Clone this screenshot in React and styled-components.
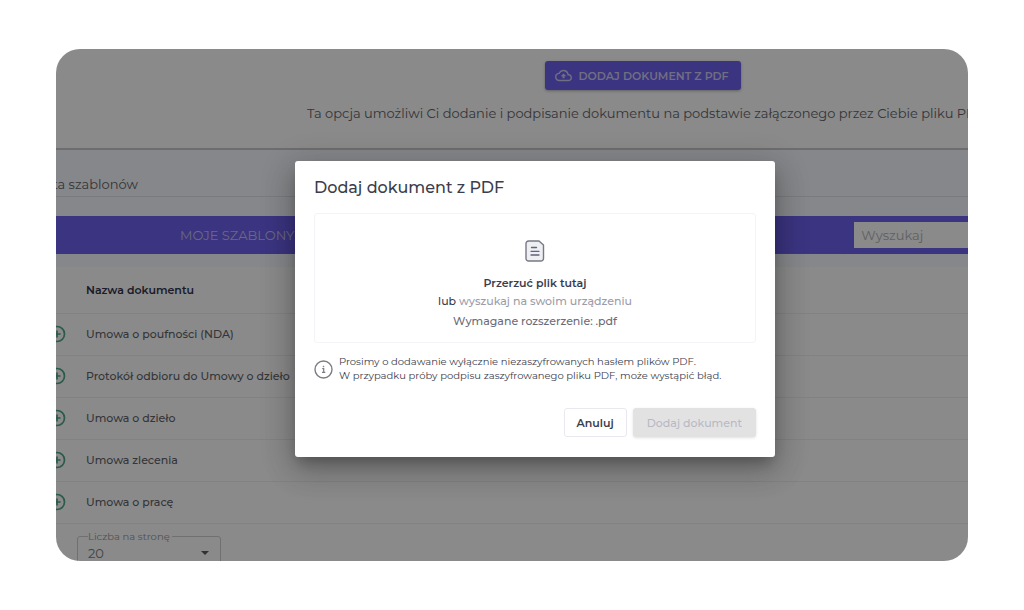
import React from "react";
import styled, { createGlobalStyle } from "styled-components";

const GlobalStyle = createGlobalStyle`
  *, *::before, *::after { box-sizing: border-box; }
  body { margin: 0; background: #fff; }
  body, button, input, select { font-family: Montserrat, Inter, "Open Sans", sans-serif; }
  h1, h2, p { margin: 0; font-weight: 400; }
`;

const Frame = styled.main`
  position: relative;
  height: calc(100vh - 98px);
  margin: 49px 56px;
  border-radius: 24px;
  overflow: hidden;
  background: #fff;
`;

/* The page is wider than the rounded frame and is cut off on both sides. */
const Page = styled.div`
  margin: 0 -283px 0 -21px;
  color: #626368;
`;

const Intro = styled.section`
  display: flex;
  flex-direction: column;
  align-items: center;
  gap: 13px;
  padding: 12px 0 25px;
  border-bottom: 2px solid #c8c9c8;
`;

const UploadButton = styled.button`
  display: flex;
  align-items: center;
  gap: 6px;
  height: 29px;
  padding: 0 12px 0 10px;
  border: 0;
  border-radius: 3px;
  background: #6d60ec;
  color: #cfcbf2;
  font-size: 11px;
  font-weight: 600;
  white-space: nowrap;
  box-shadow: 0 1px 3px rgba(0, 0, 0, 0.3);
`;

const IntroText = styled.p`
  padding-left: 6px;
  font-size: 13px;
  line-height: 20px;
  white-space: nowrap;
`;

const Templates = styled.section`
  background: #f8f9ff;
`;

const SectionTitle = styled.h2`
  padding: 24px 0 2px;
  border-bottom: 1px solid #e4e4ea;
  font-size: 13px;
  line-height: 20px;
`;

const TabBar = styled.nav`
  display: flex;
  align-items: center;
  margin-top: 19px;
  height: 38px;
  background: #6d60ec;
`;

const Tab = styled.button`
  height: 38px;
  padding: 0;
  margin-left: 145px;
  border: 0;
  background: none;
  color: #c5c1ea;
  font-size: 13px;
  white-space: nowrap;
`;

const ActiveMark = styled.span`
  align-self: flex-end;
  width: 420px;
  margin-left: 128px;
  border-bottom: 1px solid #3f9a63;
`;

const Search = styled.input`
  width: 240px;
  height: 26px;
  margin-left: 12px;
  padding: 0 7px;
  border: 0;
  background: #fff;
  font-size: 13px;
  &::placeholder { color: #b2b3b5; opacity: 1; }
`;

const DocTable = styled.table`
  width: 100%;
  margin-top: 13px;
  border-collapse: collapse;
  background: #fff;
  font-size: 11px;
  font-weight: 500;
  text-align: left;

  th, td { height: 42px; padding: 0; border-bottom: 1px solid #f1f1f1; }
  th { height: 46px; color: #33344a; font-weight: 600; }
  th:first-child, td:first-child { width: 51px; padding-left: 13px; }
`;

const AddButton = styled.button`
  display: block;
  padding: 0;
  border: 0;
  background: none;
  color: #4fa888;
  svg { display: block; }
`;

const Footer = styled.div`
  padding: 7px 0 20px 42px;
  background: #fff;
`;

const PageSize = styled.fieldset`
  width: 144px;
  margin: 0;
  padding: 0 10px 6px;
  border: 1px solid #cfcfcf;
  border-radius: 3px;
  legend { padding: 0 2px 0 0; color: #96979b; font-size: 10px; line-height: 12px; }
`;

const SelectWrap = styled.div`
  display: flex;
  align-items: center;
`;

const Select = styled.select`
  flex: 1;
  height: 20px;
  padding: 0;
  border: 0;
  appearance: none;
  background: none;
  color: #7c7d82;
  font-size: 13px;
`;

const Backdrop = styled.div`
  position: absolute;
  inset: 0 -46px 0 0;
  display: flex;
  align-items: center;
  justify-content: center;
  padding-top: 8px;
  background: rgba(0, 0, 0, 0.46);
`;

const Dialog = styled.section`
  width: 480px;
  padding: 16px 19px 20px;
  border-radius: 3px;
  background: #fff;
  color: #3c3d4c;
  box-shadow: 0 8px 12px -4px rgba(0, 0, 0, 0.25), 0 14px 30px 2px rgba(0, 0, 0, 0.16), 0 6px 34px 4px rgba(0, 0, 0, 0.14);
`;

const DialogTitle = styled.h1`
  font-size: 16px;
  font-weight: 500;
  line-height: 22px;
`;

const DropZone = styled.div`
  display: flex;
  flex-direction: column;
  align-items: center;
  height: 130px;
  margin-top: 14px;
  padding-top: 26px;
  border: 1px solid #f4f4f8;
  border-radius: 3px;
  font-size: 11px;
  line-height: 18px;
  svg { margin-bottom: 12px; }
  p { font-weight: 500; }
`;

const DropTitle = styled.p`
  && { font-weight: 600; }
`;

const BrowseLabel = styled.label`
  color: #9c9ca8;
  cursor: pointer;
`;

const FileInput = styled.input`
  position: absolute;
  width: 1px;
  height: 1px;
  opacity: 0;
`;

const Extension = styled.p`
  margin-top: 2px;
  color: #6b6c78;
`;

const Notice = styled.div`
  display: flex;
  align-items: center;
  gap: 6px;
  margin-top: 12px;
  font-size: 10px;
  line-height: 14px;
  white-space: nowrap;
  svg { flex: none; }
`;

const Actions = styled.div`
  display: flex;
  justify-content: flex-end;
  gap: 6px;
  margin-top: 25px;
`;

const ActionButton = styled.button`
  height: 29px;
  padding: 0 12px;
  border: 1px solid #e8e8f0;
  border-radius: 3px;
  background: #fff;
  color: #3c3d4c;
  font-size: 11px;
  font-weight: 600;

  &:disabled {
    padding: 0 13px;
    border-color: #e2e2e3;
    background: #e2e2e3;
    color: #b9b9c3;
    font-weight: 500;
    box-shadow: 0 1px 3px rgba(0, 0, 0, 0.12);
  }
`;

const CloudIcon = () => (
  <svg width="17" height="17" viewBox="0 0 24 24" fill="currentColor" aria-hidden="true">
    <path d="M19.35 10.04A7.49 7.49 0 0 0 12 4C9.11 4 6.6 5.64 5.35 8.04A5.994 5.994 0 0 0 0 14c0 3.31 2.69 6 6 6h13c2.76 0 5-2.24 5-5 0-2.64-2.05-4.78-4.65-4.96zM19 18H6c-2.21 0-4-1.79-4-4 0-2.05 1.53-3.76 3.56-3.97l1.07-.11.5-.95A5.469 5.469 0 0 1 12 6c2.62 0 4.88 1.86 5.39 4.43l.3 1.5 1.53.11A2.98 2.98 0 0 1 22 15c0 1.65-1.35 3-3 3zM8 13h2.55v3h2.9v-3H16l-4-4z" />
  </svg>
);

const PlusIcon = () => (
  <svg width="18" height="18" viewBox="0 0 18 18" fill="none" stroke="currentColor" strokeWidth="1.7" aria-hidden="true">
    <circle cx="9" cy="9" r="7.5" />
    <path d="M9 5.4v7.2M5.4 9h7.2" />
  </svg>
);

const FileIcon = () => (
  <svg width="20" height="22" viewBox="0 0 20 22" fill="none" aria-hidden="true">
    <path d="M3.5 1h10.5L18.5 5V18.5a2.5 2.5 0 0 1-2.5 2.5H3.5A2.5 2.5 0 0 1 1 18.5V3.5A2.5 2.5 0 0 1 3.5 1z" fill="#eeeff3" stroke="#777885" strokeWidth="1.4" strokeLinejoin="round" />
    <path d="M6.5 7.5h5M6 11.3h8M6 15h8" stroke="#62637c" strokeWidth="1.3" strokeLinecap="round" />
  </svg>
);

const InfoIcon = () => (
  <svg width="19" height="19" viewBox="0 0 19 19" fill="none" stroke="#7c7c86" aria-hidden="true">
    <circle cx="9.5" cy="9.5" r="8.5" strokeWidth="1.4" />
    <path d="M8.2 8.7h1.5v3.6M8 12.4h3.3" strokeWidth="1.2" />
    <circle cx="9.5" cy="6.5" r="0.5" fill="#7c7c86" strokeWidth="0.6" />
  </svg>
);

const ArrowIcon = () => (
  <svg width="10" height="6" viewBox="0 0 10 6" aria-hidden="true">
    <path d="M1 1h8L5 5z" fill="#5c5d63" />
  </svg>
);

const documents = [
  "Umowa o poufności (NDA)",
  "Protokół odbioru do Umowy o dzieło",
  "Umowa o dzieło",
  "Umowa zlecenia",
  "Umowa o pracę",
];

export default function App() {
  return (
    <>
      <GlobalStyle />
      <Frame>
        <Page>
          <Intro>
            <UploadButton type="button"><CloudIcon />DODAJ DOKUMENT Z PDF</UploadButton>
            <IntroText>Ta opcja umożliwi Ci dodanie i podpisanie dokumentu na podstawie załączonego przez Ciebie pliku PDF</IntroText>
          </Intro>
          <Templates>
            <SectionTitle>Lista szablonów</SectionTitle>
            <TabBar>
              <Tab type="button">MOJE SZABLONY</Tab>
              <ActiveMark />
              <Search type="search" placeholder="Wyszukaj" aria-label="Wyszukaj" />
            </TabBar>
            <DocTable>
              <thead>
                <tr><th /><th scope="col">Nazwa dokumentu</th></tr>
              </thead>
              <tbody>
                {documents.map((name) => (
                  <tr key={name}>
                    <td><AddButton type="button" aria-label={name}><PlusIcon /></AddButton></td>
                    <td>{name}</td>
                  </tr>
                ))}
              </tbody>
            </DocTable>
            <Footer>
              <PageSize>
                <legend><label htmlFor="page-size">Liczba na stronę</label></legend>
                <SelectWrap>
                  <Select id="page-size" defaultValue="20"><option>20</option></Select>
                  <ArrowIcon />
                </SelectWrap>
              </PageSize>
            </Footer>
          </Templates>
        </Page>
        <Backdrop>
          <Dialog role="dialog" aria-modal="true" aria-labelledby="dialog-title">
            <DialogTitle id="dialog-title">Dodaj dokument z PDF</DialogTitle>
            <DropZone>
              <FileIcon />
              <DropTitle>Przerzuć plik tutaj</DropTitle>
              <p>lub <BrowseLabel htmlFor="pdf-file">wyszukaj na swoim urządzeniu</BrowseLabel></p>
              <FileInput id="pdf-file" type="file" accept=".pdf" />
              <Extension>Wymagane rozszerzenie: .pdf</Extension>
            </DropZone>
            <Notice>
              <InfoIcon />
              <p>
                Prosimy o dodawanie wyłącznie niezaszyfrowanych hasłem plików PDF.<br />
                W przypadku próby podpisu zaszyfrowanego pliku PDF, może wystąpić błąd.
              </p>
            </Notice>
            <Actions>
              <ActionButton type="button">Anuluj</ActionButton>
              <ActionButton type="button" disabled>Dodaj dokument</ActionButton>
            </Actions>
          </Dialog>
        </Backdrop>
      </Frame>
    </>
  );
}
